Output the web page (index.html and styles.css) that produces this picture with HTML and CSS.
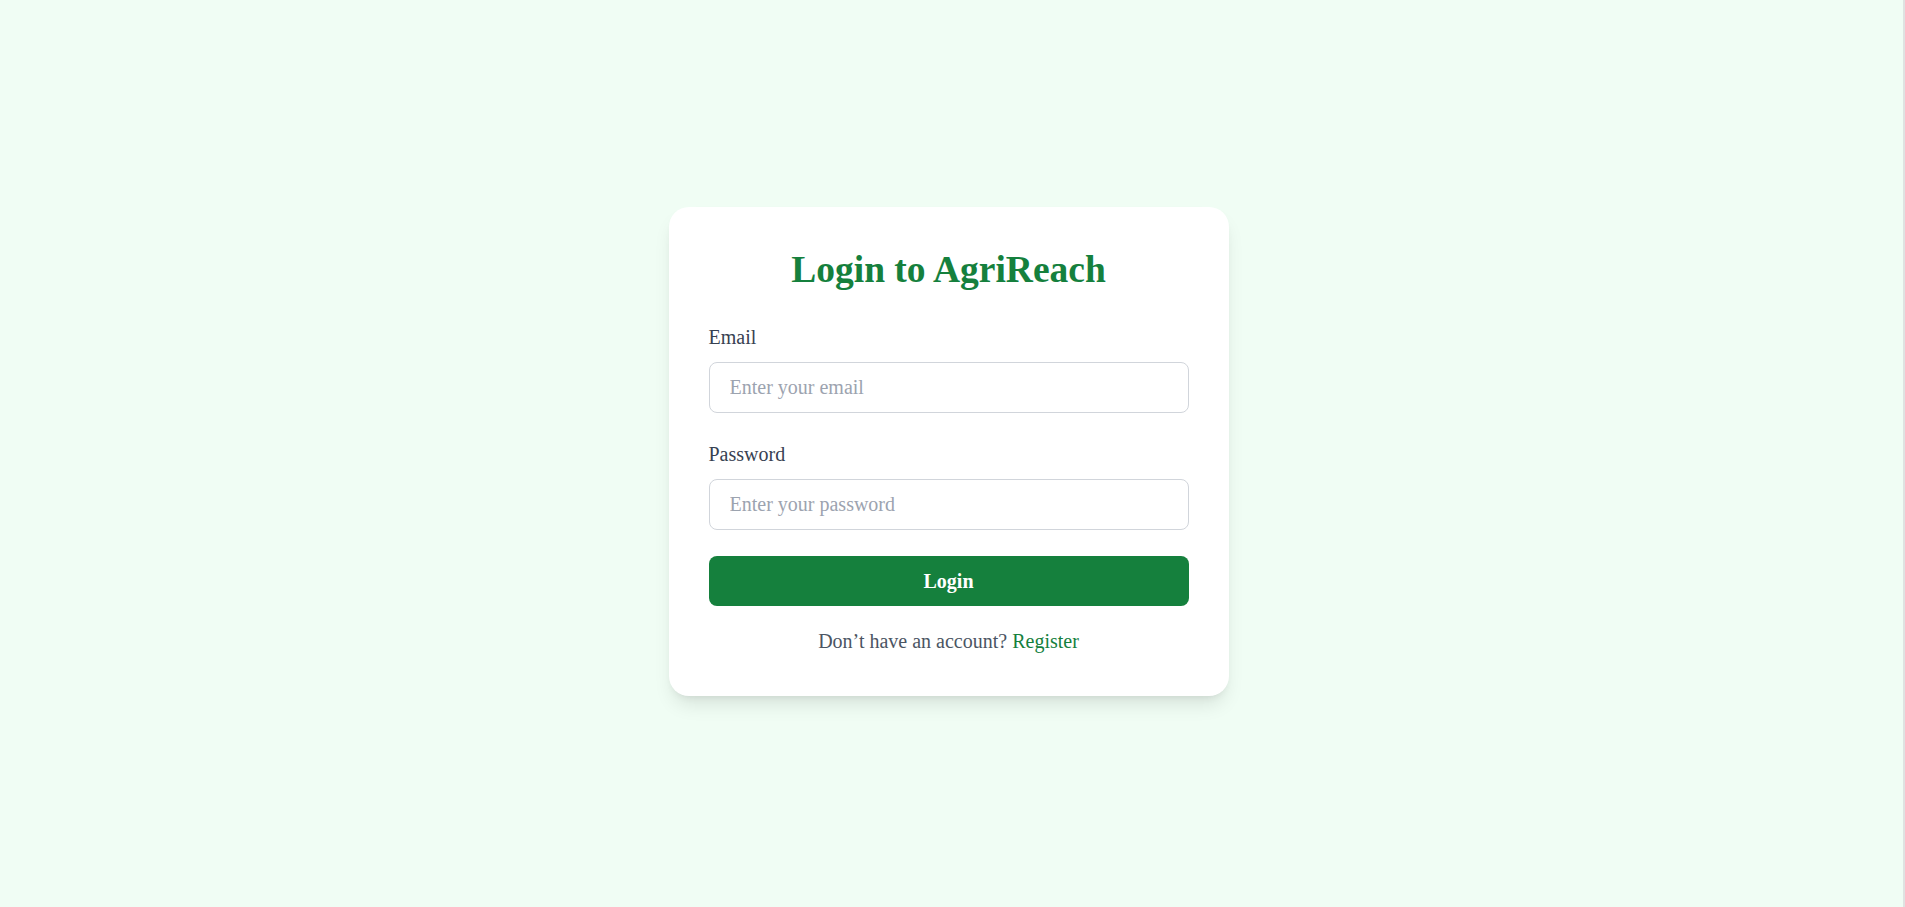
FILE: index.html
```html
<!DOCTYPE html>
<html lang="en">
<head>
<meta charset="utf-8">
<title>Login to AgriReach</title>
<link rel="stylesheet" href="styles.css">
</head>
<body>
<div class="page">
  <div class="card">
    <h1 class="title">Login to AgriReach</h1>
    <form class="form">
      <div class="field">
        <label class="label" for="email">Email</label>
        <input class="input" id="email" type="email" placeholder="Enter your email">
      </div>
      <div class="field">
        <label class="label" for="password">Password</label>
        <input class="input" id="password" type="password" placeholder="Enter your password">
      </div>
      <button class="btn" type="button">Login</button>
    </form>
    <p class="footer">Don’t have an account? <a class="link" href="#">Register</a></p>
  </div>
</div>
</body>
</html>
```
FILE: styles.css
```css
* { box-sizing: border-box; }
html, body { margin: 0; padding: 0; }
body {
  font-family: "Liberation Serif", "Times New Roman", serif;
  background: #f0fdf4;
}
.page {
  min-height: 100vh;
  display: flex;
  align-items: center;
  justify-content: center;
  border-right: 2px solid #dfe3e1;
  padding-right: 6px;
  padding-bottom: 4px;
}
.card {
  width: 560px;
  background: #ffffff;
  border-radius: 20px;
  padding: 40px;
  box-shadow: 0 12px 19px -4px rgba(0,0,0,0.1), 0 5px 8px -5px rgba(0,0,0,0.1);
}
.title {
  margin: 0 0 30px;
  text-align: center;
  font-size: 37.5px;
  line-height: 45px;
  font-weight: bold;
  color: #15803d;
}
.form {
  display: flex;
  flex-direction: column;
  gap: 26px;
}
.field {
  display: flex;
  flex-direction: column;
}
.label {
  font-size: 20px;
  line-height: 30px;
  color: #374151;
  margin-bottom: 10px;
}
.input {
  height: 51px;
  padding: 0 20px;
  font-family: inherit;
  font-size: 20px;
  color: #111827;
  border: 1px solid #d1d5db;
  border-radius: 8px;
  outline: none;
  background: #fff;
}
.input::placeholder { color: #9ca3af; }
.btn {
  height: 50px;
  border: none;
  border-radius: 8px;
  background: #15803d;
  color: #ffffff;
  font-family: inherit;
  font-size: 20px;
  font-weight: bold;
  cursor: pointer;
}
.footer {
  margin: 20px 0 0;
  text-align: center;
  font-size: 20px;
  line-height: 30px;
  color: #4b5563;
}
.link {
  color: #15803d;
  text-decoration: none;
}
```
